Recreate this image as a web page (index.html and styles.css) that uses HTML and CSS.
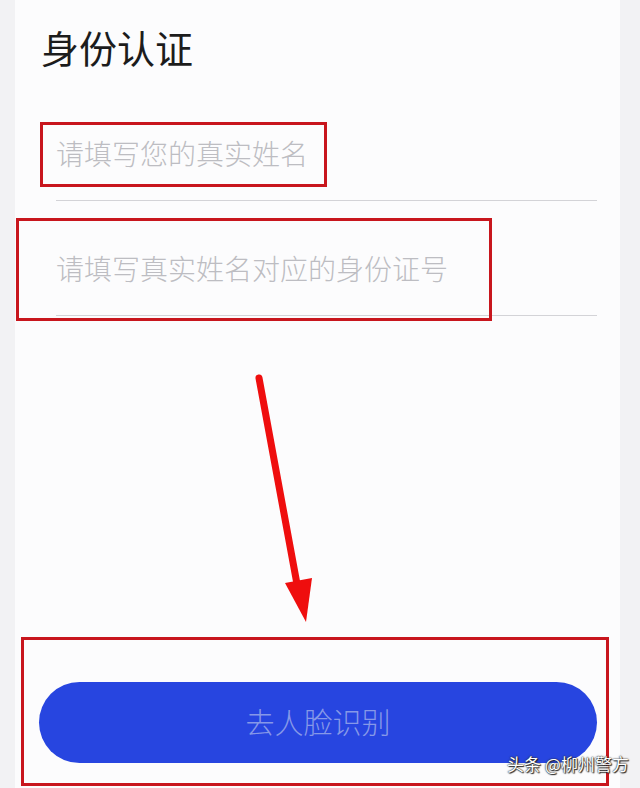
FILE: index.html
```html
<!DOCTYPE html>
<html lang="zh-CN">
<head>
<meta charset="utf-8">
<title>身份认证</title>
<link rel="stylesheet" href="styles.css">
</head>
<body>
<div class="page">
  <main class="panel">
    <h1 class="title">身份认证</h1>
    <div class="field"><span class="placeholder">请填写您的真实姓名</span></div>
    <div class="field"><span class="placeholder">请填写真实姓名对应的身份证号</span></div>
    <div class="spacer"></div>
    <button class="btn" type="button">去人脸识别</button>
  </main>

  <div class="mark mark-name"></div>
  <div class="mark mark-id"></div>
  <div class="mark mark-btn"></div>
  <svg class="arrow" width="640" height="788" viewBox="0 0 640 788">
    <line x1="259" y1="378" x2="297" y2="584" stroke="#ef0e0e" stroke-width="7" stroke-linecap="round"/>
    <polygon points="285,583 312,578 306,622" fill="#ef0e0e"/>
  </svg>
  <div class="watermark">头条 @柳州警方</div>
</div>
</body>
</html>
```
FILE: styles.css
```css
html, body {
  margin: 0;
  padding: 0;
}
body {
  background: #f2f2f4;
  font-family: "Noto Sans CJK SC", "Noto Sans", sans-serif;
}
.page {
  position: relative;
  width: 640px;
  height: 788px;
  overflow: hidden;
}
.panel {
  box-sizing: border-box;
  margin: 0 20px 0 15px;
  height: 788px;
  background: #fcfcfd;
  display: flex;
  flex-direction: column;
  padding: 22px 23px 25px 0;
}
.title {
  margin: 0 0 14px 26px;
  font-size: 38px;
  line-height: 50px;
  font-weight: 400;
  color: #1c1c1c;
}
.field {
  box-sizing: border-box;
  height: 115px;
  margin-left: 41px;
  border-bottom: 1px solid #d3d3d7;
  display: flex;
  align-items: flex-end;
  padding-bottom: 33px;
}
.placeholder {
  font-size: 28px;
  line-height: 28px;
  font-weight: 300;
  color: #bdbdc2;
}
.spacer {
  flex: 1;
}
.btn {
  margin-left: 24px;
  height: 81px;
  border: 0;
  border-radius: 41px;
  background: #2745e0;
  color: #8698e8;
  font-family: inherit;
  font-size: 29px;
  font-weight: 300;
  padding: 0 0 4px;
}
.mark {
  position: absolute;
  box-sizing: border-box;
  border: 3px solid #c8161d;
}
.mark-name { left: 40px; top: 122px; width: 287px; height: 65px; }
.mark-id { left: 16px; top: 218px; width: 476px; height: 103px; }
.mark-btn { left: 21px; top: 637px; width: 588px; height: 149px; }
.arrow {
  position: absolute;
  left: 0;
  top: 0;
}
.watermark {
  position: absolute;
  left: 507px;
  top: 752px;
  font-size: 17px;
  line-height: 24px;
  color: #ffffff;
  text-shadow: 0 0 1px #222, 0 0 2px #333, 1px 1px 1px #222;
}
```
